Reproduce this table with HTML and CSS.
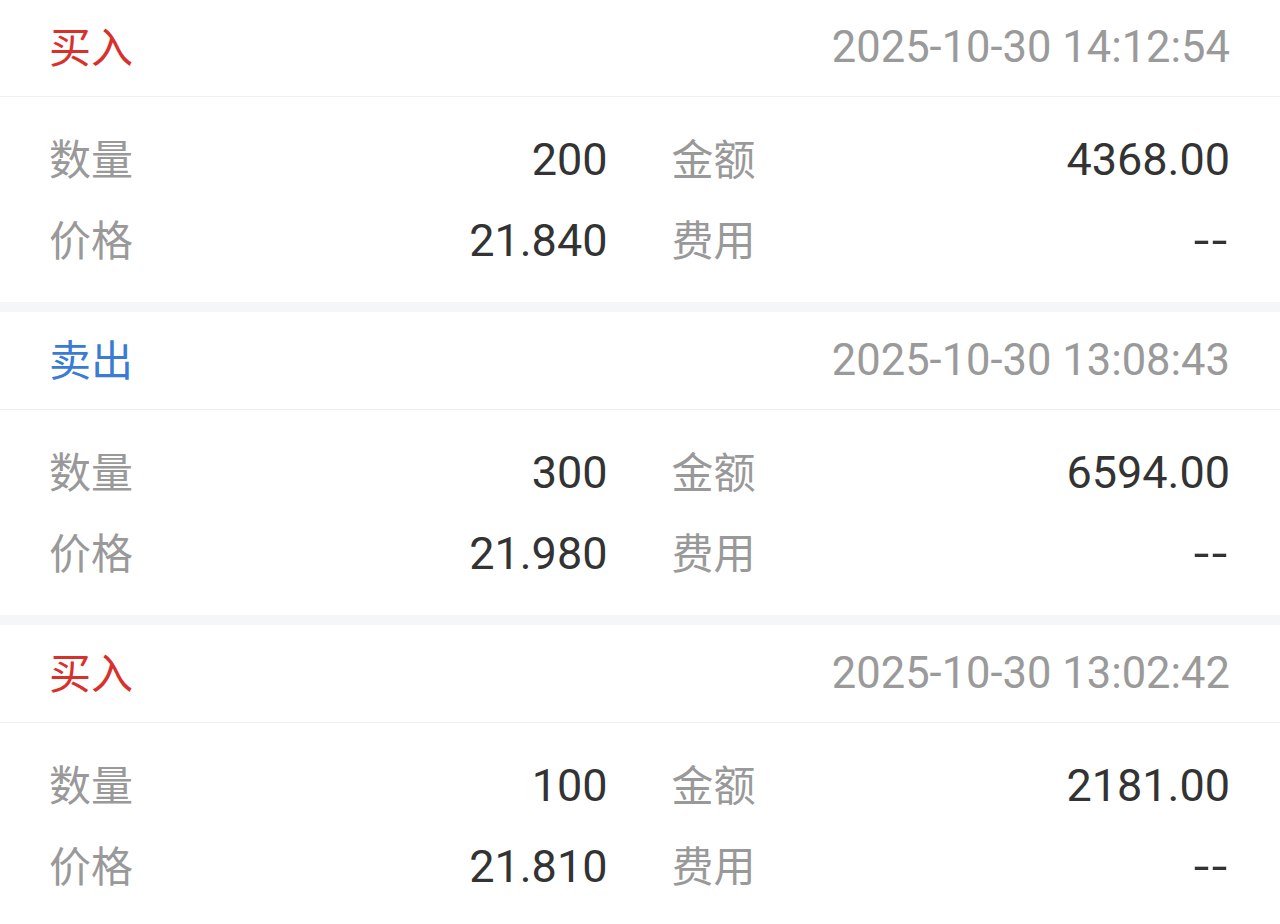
FILE: index.html
```html
<!DOCTYPE html>
<html lang="zh-CN">
<head>
<meta charset="utf-8">
<title>成交记录</title>
<link rel="stylesheet" href="styles.css">
</head>
<body>
<div class="list">
  <section class="card">
    <div class="card-head">
      <span class="side buy">买入</span>
      <span class="time">2025-10-30 14:12:54</span>
    </div>
    <div class="card-body">
      <div class="cell"><span class="label">数量</span><span class="value">200</span></div>
      <div class="cell"><span class="label">金额</span><span class="value">4368.00</span></div>
      <div class="cell"><span class="label">价格</span><span class="value">21.840</span></div>
      <div class="cell"><span class="label">费用</span><span class="value empty">--</span></div>
    </div>
  </section>
  <section class="card">
    <div class="card-head">
      <span class="side sell">卖出</span>
      <span class="time">2025-10-30 13:08:43</span>
    </div>
    <div class="card-body">
      <div class="cell"><span class="label">数量</span><span class="value">300</span></div>
      <div class="cell"><span class="label">金额</span><span class="value">6594.00</span></div>
      <div class="cell"><span class="label">价格</span><span class="value">21.980</span></div>
      <div class="cell"><span class="label">费用</span><span class="value empty">--</span></div>
    </div>
  </section>
  <section class="card">
    <div class="card-head">
      <span class="side buy">买入</span>
      <span class="time">2025-10-30 13:02:42</span>
    </div>
    <div class="card-body">
      <div class="cell"><span class="label">数量</span><span class="value">100</span></div>
      <div class="cell"><span class="label">金额</span><span class="value">2181.00</span></div>
      <div class="cell"><span class="label">价格</span><span class="value">21.810</span></div>
      <div class="cell"><span class="label">费用</span><span class="value empty">--</span></div>
    </div>
  </section>
</div>
</body>
</html>
```
FILE: styles.css
```css
html, body {
  margin: 0;
  padding: 0;
  background: #f5f6f8;
}
body {
  font-family: Roboto, "Noto Sans CJK SC", sans-serif;
  font-size: 44px;
  overflow: hidden;
}
.list {
  display: flex;
  flex-direction: column;
  gap: 10px;
  margin-top: -1px;
}
.card {
  background: #fff;
}
.card-head {
  height: 97px;
  display: flex;
  align-items: center;
  justify-content: space-between;
  padding: 0 50px 0 49px;
  border-bottom: 1px solid #f0f0f0;
}
.side {
  font-family: "Noto Sans CJK SC", sans-serif;
  font-size: 42px;
  padding-bottom: 6px;
}
.buy { color: #d8312c; }
.sell { color: #3a7bd3; }
.time {
  color: #9a9a9a;
  font-size: 43.5px;
}
.card-body {
  display: grid;
  grid-template-columns: 1fr 1fr;
  column-gap: 64px;
  padding: 22px 50px 21px 49px;
}
.cell {
  height: 81px;
  display: flex;
  align-items: center;
  justify-content: space-between;
}
.label {
  font-family: "Noto Sans CJK SC", sans-serif;
  font-size: 42px;
  color: #999;
  padding-bottom: 6px;
}
.value {
  color: #333;
  font-size: 45px;
}
.empty {
  display: inline-block;
  letter-spacing: 2px;
  transform: scaleX(1.25);
  transform-origin: right center;
}
```
